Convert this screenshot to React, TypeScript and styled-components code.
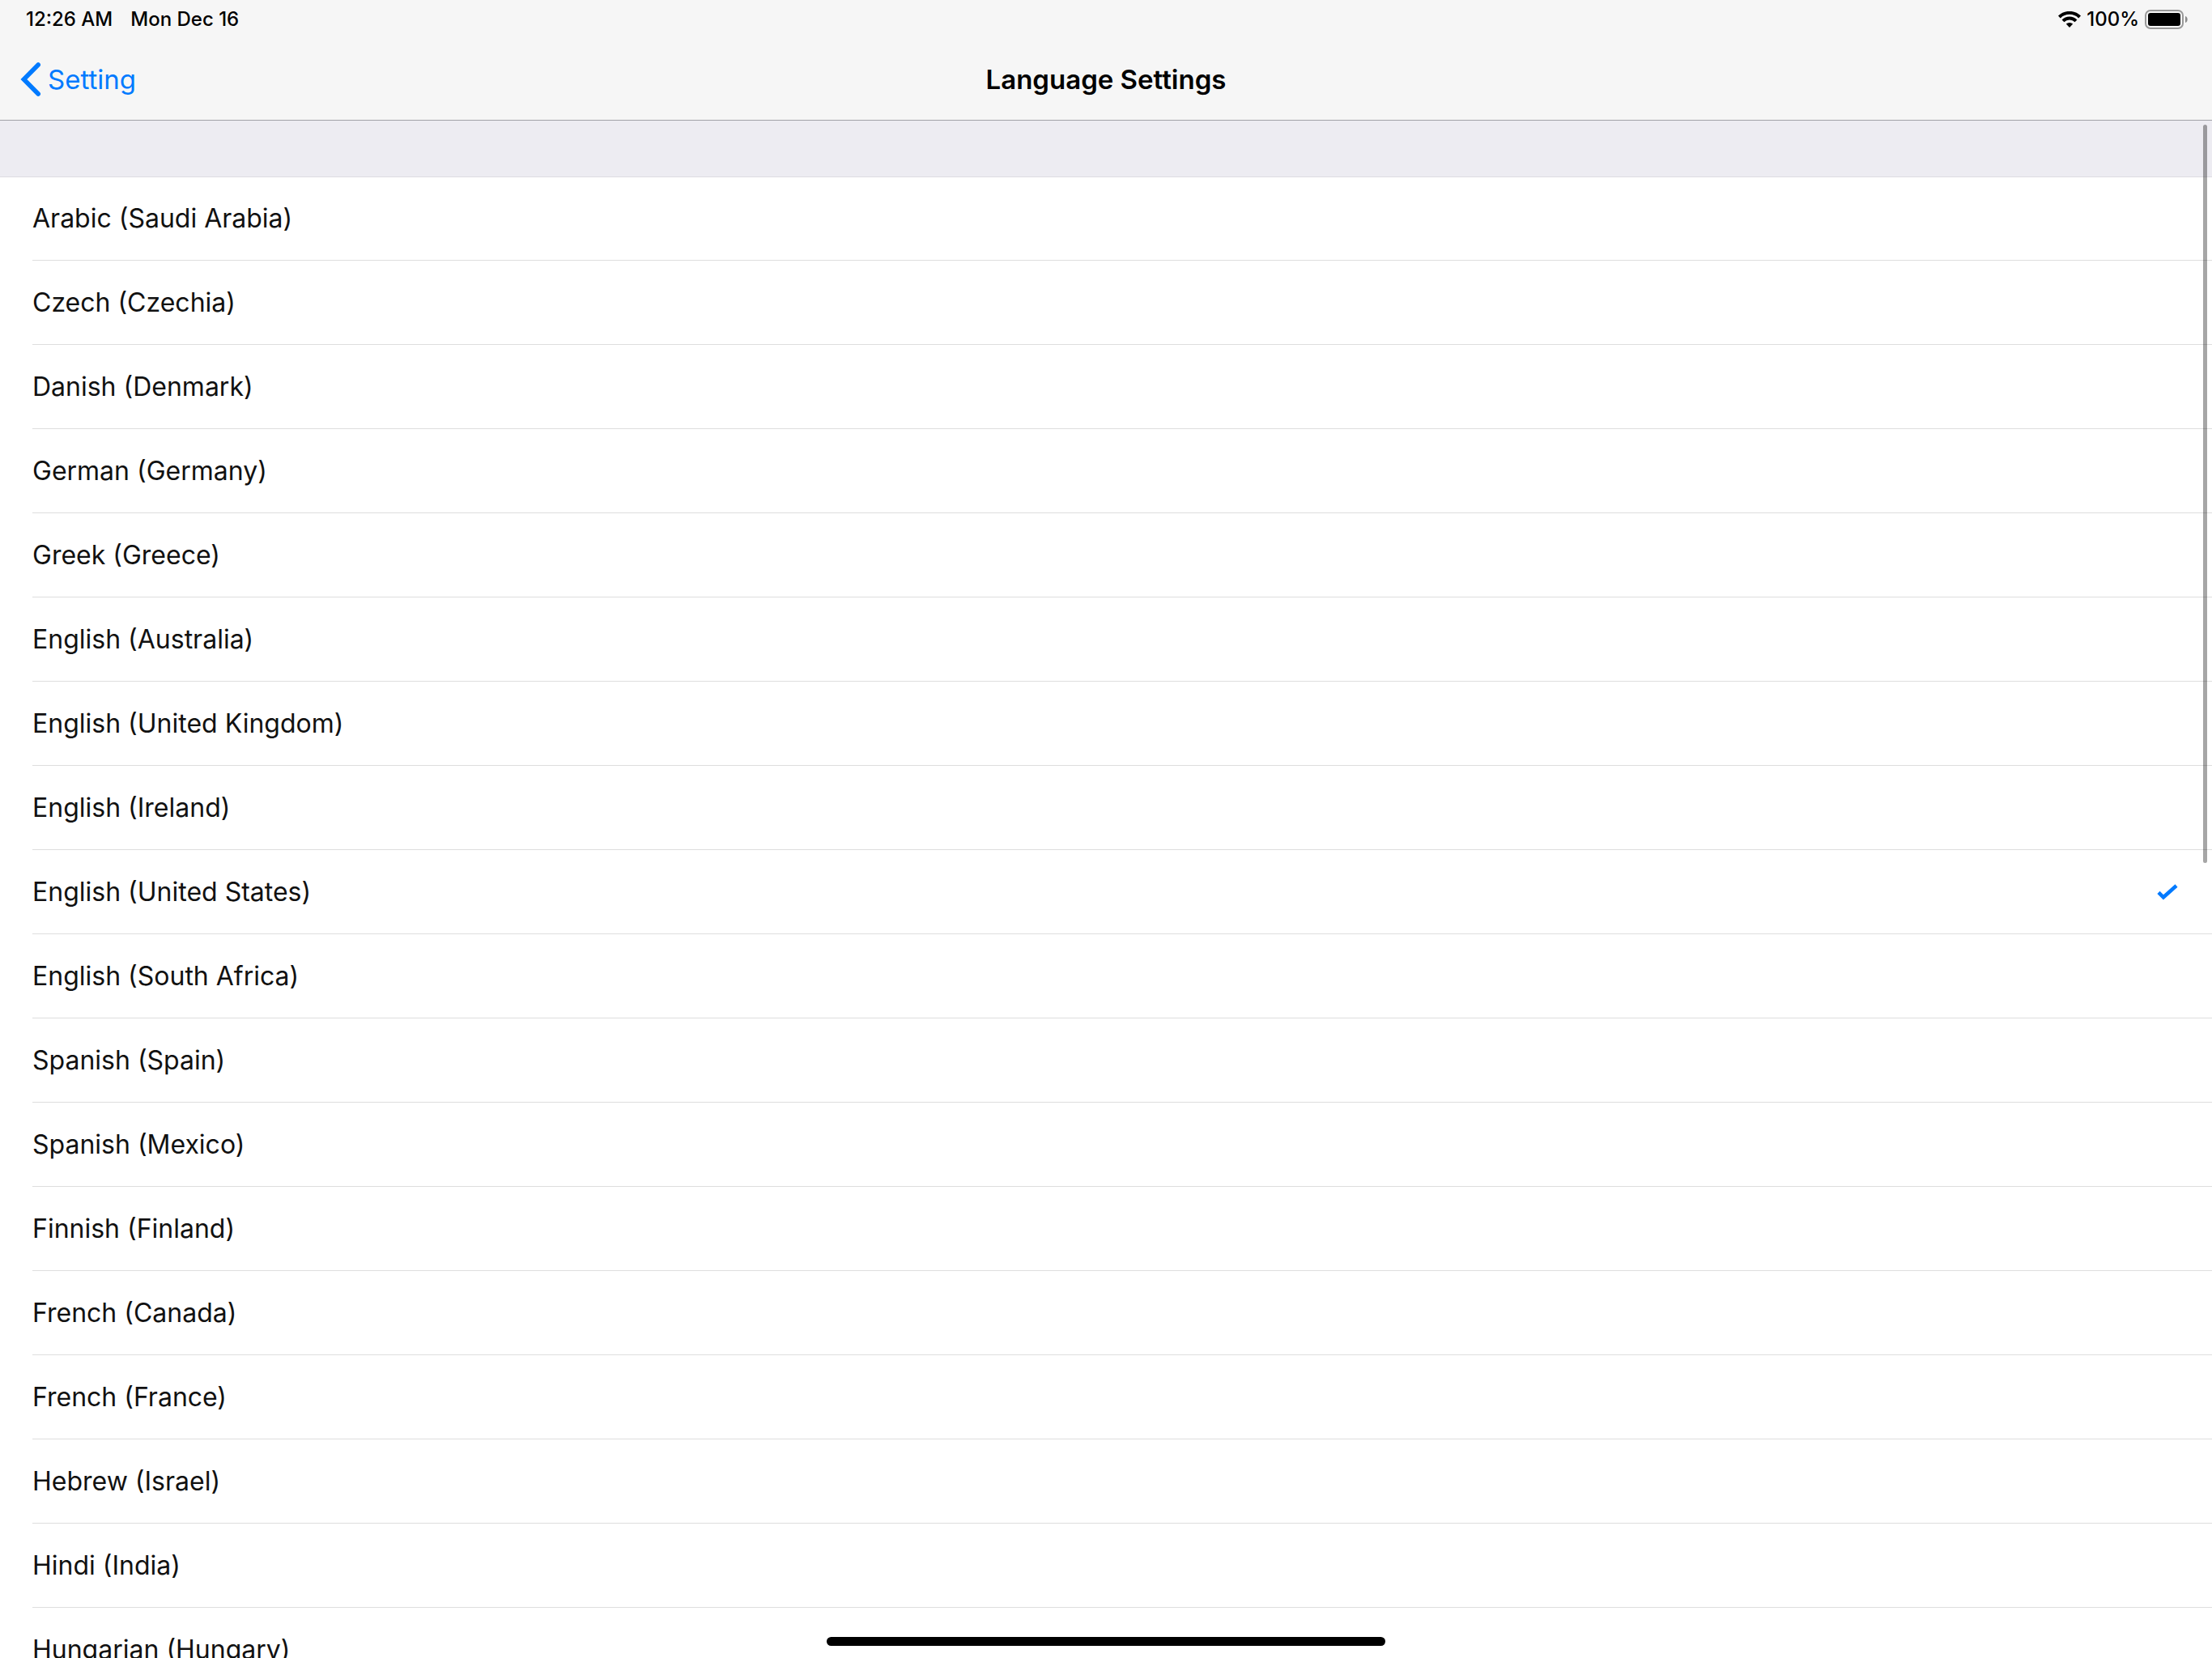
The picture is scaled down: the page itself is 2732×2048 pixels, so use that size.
import React, { useState } from "react";
import styled, { createGlobalStyle } from "styled-components";

const GlobalStyle = createGlobalStyle`
  *, *::before, *::after { box-sizing: border-box; }
  body {
    margin: 0;
    background: #fff;
    font-family: Inter, "Liberation Sans", sans-serif;
    -webkit-font-smoothing: antialiased;
  }
`;

const Screen = styled.div`
  position: relative;
  display: flex;
  flex-direction: column;
  height: 100vh;
  overflow: hidden;
  color: #111;
`;

const TopBar = styled.header`
  flex: none;
  background: #f6f6f6;
  border-bottom: 1px solid #a2a2a8;
  color: #000;
`;

const StatusBar = styled.div`
  display: flex;
  align-items: center;
  justify-content: space-between;
  height: 48px;
  padding: 0 30px 0 32px;
  font-size: 24px;
  font-weight: 500;
  line-height: 28px;
`;

const StatusGroup = styled.div<{ $gap: number }>`
  display: flex;
  align-items: center;
  gap: ${(p) => p.$gap}px;
`;

const NavBar = styled.nav`
  display: grid;
  grid-template-columns: 1fr auto 1fr;
  align-items: center;
  height: 100px;
  padding: 0 24px;
`;

const BackLink = styled.a`
  display: flex;
  align-items: center;
  gap: 7px;
  color: #007aff;
  font-size: 33px;
  line-height: 40px;
  text-decoration: none;
`;

const Title = styled.h1`
  margin: 0;
  font-size: 33px;
  font-weight: 600;
  line-height: 40px;
`;

const ListArea = styled.main`
  position: relative;
  flex: 1;
  min-height: 0;
  overflow: hidden;
`;

const SectionGap = styled.div`
  height: 69px;
  background: #edecf2;
`;

const Options = styled.div`
  display: flex;
  flex-direction: column;
`;

const Option = styled.label`
  flex: none;
  height: 104px;
  padding-left: 40px;
  background: #fff;
  font-size: 32px;
  line-height: 40px;
  cursor: pointer;

  &:first-child {
    border-top: 1px solid #dddce2;
  }
`;

const OptionBody = styled.span`
  display: flex;
  align-items: center;
  justify-content: space-between;
  height: 100%;
  padding-right: 40px;
  border-bottom: 1px solid #dedede;
`;

const Mark = styled.span`
  display: grid;
  place-items: center;

  > * {
    grid-area: 1 / 1;
  }
`;

const Radio = styled.input`
  appearance: none;
  width: 28px;
  height: 28px;
  margin: 0;
  outline: none;

  & + svg {
    visibility: hidden;
  }

  &:checked + svg {
    visibility: visible;
  }
`;

const ScrollThumb = styled.div`
  position: absolute;
  top: 5px;
  right: 6px;
  width: 5px;
  height: 48%;
  border-radius: 3px;
  background: rgba(0, 0, 0, 0.35);
`;

const HomeIndicator = styled.div`
  position: absolute;
  bottom: 15px;
  left: 50%;
  width: 690px;
  height: 11px;
  border-radius: 6px;
  background: #000;
  transform: translateX(-50%);
`;

const WifiIcon = () => (
  <svg width="28" height="20" viewBox="0 0 28 20" aria-hidden="true">
    <g fill="none" stroke="#000" strokeWidth="4">
      <path d="M1.4 7A18 18 0 0 1 26.6 7" />
      <path d="M6 11.9A11.4 11.4 0 0 1 22 11.9" />
    </g>
    <path d="M14 20L9.8 15.6A6.4 6.4 0 0 1 18.2 15.6Z" />
  </svg>
);

const BatteryIcon = () => (
  <svg width="53" height="24" viewBox="0 0 53 24" aria-hidden="true">
    <rect x="1" y="1" width="46" height="22" rx="6" fill="none" stroke="#999" strokeWidth="2" />
    <rect x="4" y="4" width="40" height="16" rx="3" />
    <path d="M50 8C53.6 9 53.6 15 50 16Z" fill="#8c8c8c" />
  </svg>
);

const BackIcon = () => (
  <svg width="28" height="44" viewBox="0 0 28 44" aria-hidden="true">
    <path d="M23.2 4L5.4 22L23.2 40" fill="none" stroke="currentColor" strokeWidth="5.6" strokeLinecap="round" />
  </svg>
);

const CheckIcon = () => (
  <svg width="28" height="22" viewBox="0 0 28 22" aria-hidden="true">
    <path d="M2 11.3L8 17.3L24 3" fill="none" stroke="#007aff" strokeWidth="4.5" />
  </svg>
);

const languages = [
  "Arabic (Saudi Arabia)",
  "Czech (Czechia)",
  "Danish (Denmark)",
  "German (Germany)",
  "Greek (Greece)",
  "English (Australia)",
  "English (United Kingdom)",
  "English (Ireland)",
  "English (United States)",
  "English (South Africa)",
  "Spanish (Spain)",
  "Spanish (Mexico)",
  "Finnish (Finland)",
  "French (Canada)",
  "French (France)",
  "Hebrew (Israel)",
  "Hindi (India)",
  "Hungarian (Hungary)",
];

export default function App() {
  const [selected, setSelected] = useState("English (United States)");

  return (
    <Screen>
      <GlobalStyle />
      <TopBar>
        <StatusBar>
          <StatusGroup $gap={22}>
            <span>12:26 AM</span>
            <span>Mon Dec 16</span>
          </StatusGroup>
          <StatusGroup $gap={7}>
            <WifiIcon />
            <span>100%</span>
            <BatteryIcon />
          </StatusGroup>
        </StatusBar>
        <NavBar>
          <BackLink href="#setting">
            <BackIcon />
            Setting
          </BackLink>
          <Title>Language Settings</Title>
        </NavBar>
      </TopBar>
      <ListArea>
        <SectionGap />
        <Options role="radiogroup" aria-label="Language Settings">
          {languages.map((name) => (
            <Option key={name}>
              <OptionBody>
                {name}
                <Mark>
                  <Radio
                    type="radio"
                    name="language"
                    value={name}
                    checked={selected === name}
                    onChange={() => setSelected(name)}
                  />
                  <CheckIcon />
                </Mark>
              </OptionBody>
            </Option>
          ))}
        </Options>
        <ScrollThumb />
      </ListArea>
      <HomeIndicator />
    </Screen>
  );
}
